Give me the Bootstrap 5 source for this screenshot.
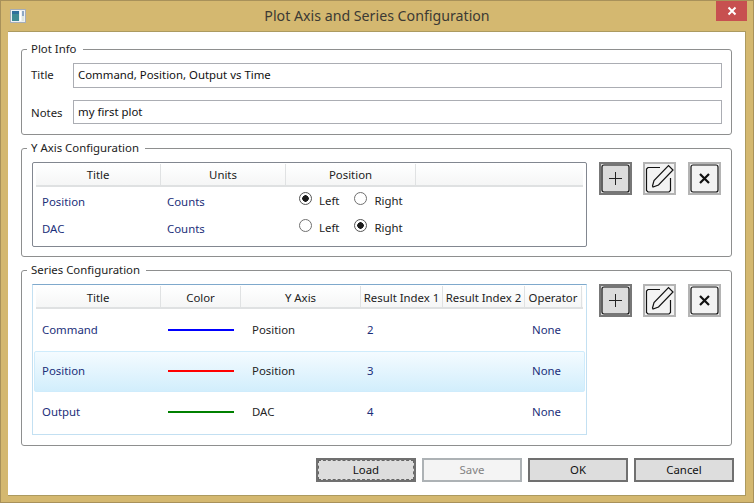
<!DOCTYPE html>
<html lang="en">
<head>
    <meta charset="UTF-8">
    <meta name="viewport" content="width=device-width, initial-scale=1.0">
    <title>Plot Axis and Series Configuration</title>
    <link href="https://cdn.jsdelivr.net/npm/bootstrap@5.3.0/dist/css/bootstrap.min.css" rel="stylesheet">
    <style>
        html, body {
            height: 100%;
        }
        body {
            background-color: #d4b870;
            font-family: "Noto Sans", "Open Sans", sans-serif;
            font-size: 11.4px;
            line-height: 16px;
            color: #1c1c1c;
            overflow: hidden;
        }
        .win-frame {
            width: 754px;
            height: 503px;
            border: 1px solid #a8915a;
            background-color: #d4b870;
        }
        .win-title {
            height: 30px;
            padding-left: 9px;
        }
        .win-caption {
            font-size: 14.2px;
            color: #3c3a34;
            line-height: 30px;
            left: 0;
            right: 0;
            top: 0;
            text-align: center;
        }
        .win-close {
            right: 6px;
            top: 0;
            width: 31px;
            height: 20px;
            background-color: #c75050;
        }
        .win-client {
            height: 465px;
            margin: 0 7px;
            background-color: #fff;
            border: 1px solid #ac9a60;
            border-left: 0;
            padding: 9px 13px 0 13px;
        }
        .group-box {
            border: 1px solid #8e8f8f;
            border-radius: 3px;
            margin: 0 0 5px 0;
            min-width: 0;
        }
        .group-box legend {
            float: none;
            width: auto;
            font-size: 11.4px;
            line-height: 16px;
            margin: 0 0 0 -5px;
            padding: 0 6px 0 4px;
            color: #222;
        }
        .group-info { height: 94px; padding: 6px 9px 0 9px; }
        .group-info legend { margin-left: -4px; }
        .group-axis { height: 117px; padding: 6px 10px 0 10px; }
        .group-series { height: 184px; padding: 6px 10px 0 10px; }
        .field-label {
            width: 42px;
            color: #222;
        }
        .title-label { margin-bottom: 2px; }
        .notes-label { margin-top: 2px; }
        .field-input {
            flex: 1;
            height: 25px;
            border: 1px solid #abadb3;
            padding: 0 4px 2px 4px;
            font-size: 11.4px;
            line-height: 20px;
            color: #111;
            font-family: inherit;
            border-radius: 0;
        }
        .short-input {
            height: 24px;
        }
        .axis-grid {
            width: 555px;
            height: 85px;
            border: 1px solid #828790;
            border-radius: 2px;
            padding: 1px 3px;
        }
        .series-grid {
            width: 555px;
            height: 151px;
            border: 1px solid #c3e0f2;
            border-top-color: #7fa9cc;
            padding: 1px 3px;
        }
        .head-row {
            display: flex;
            height: 23px;
            padding-top: 2px;
            border-bottom: 2px solid #dfe1e2;
            background: linear-gradient(#fff, #f5f6f6);
            text-align: center;
            line-height: 20px;
            color: #222;
        }
        .head-row > div {
            border-right: 1px solid #e0e2e3;
            flex: none;
            margin-top: -2px;
            padding-top: 2px;
        }
        .axis-grid .head-row > div { padding-top: 1px; }
        .axis-cols { display: grid; grid-template-columns: 125px 125px 130px 1fr; }
        .series-cols { display: grid; grid-template-columns: 126px 84px 115px 82px 83px 58px; }
        .axis-row {
            height: 27.5px;
            padding-left: 6px;
            align-items: center;
            margin-right: -1px;
            position: relative;
            top: 1px;
        }
        .series-row {
            height: 41px;
            align-items: center;
            margin: 0 -2px;
            padding-left: 7px;
            border: 1px solid transparent;
            border-radius: 2px;
        }
        .series-row > div { margin-top: -2px; }
        #seriesRows {
            padding-top: 1px;
        }
        .series-row.selected-row {
            background: linear-gradient(#f4fbff, #d2eefc);
            border-color: #cfecfc;
        }
        .cell-link { color: #1b2f7a; }
        .cell-plain { color: #24241f; }
        .swatch-line {
            width: 66px;
            height: 2px;
        }
        .pick-group {
            display: flex;
            gap: 15px;
            margin: -2px 0 0 7px;
            color: #222;
        }
        .pick-group label {
            display: flex;
            align-items: center;
            gap: 7px;
            margin: 0;
        }
        .pick-group .form-check-input {
            width: 13px;
            height: 13px;
            margin: 0 0 5px 0;
            border: 1px solid #707070;
            flex: none;
        }
        .pick-group .form-check-input:checked {
            background-color: #fff;
            border-color: #555;
            background-image: radial-gradient(circle, #1c1c1c 0, #1c1c1c 3px, transparent 3.5px);
        }
        .tool-stack {
            gap: 11px;
            margin-left: 12px;
        }
        .tool-btn {
            width: 33px;
            height: 33px;
            padding: 0;
            border: 2px solid #b4b4b4;
            border-radius: 0;
            background-color: #f3f3f3;
            display: flex;
            align-items: center;
            justify-content: center;
        }
        .tool-btn:last-child { margin-left: 1px; }
        .tool-btn.hot-btn {
            border-color: #777;
            background-color: #dcdcdc;
        }
        .foot-bar {
            gap: 6px;
            padding-top: 12px;
            margin-right: -2px;
        }
        .dlg-btn {
            width: 100px;
            height: 24px;
            padding: 0;
            font-size: 11.4px;
            line-height: 18px;
            border: 2px solid #707070;
            border-radius: 0;
            background-color: #dddddd;
            color: #111;
        }
        .dlg-btn:disabled {
            border-color: #adb2b5;
            background-color: #f4f4f4;
            color: #838383;
            opacity: 1;
        }
        .focus-btn {
            outline: 1px dashed #666;
            outline-offset: -3px;
        }
    </style>
</head>
<body>
    <div class="win-frame">
        <!-- Title bar -->
        <div class="win-title position-relative d-flex align-items-start">
            <svg class="mt-2" width="16" height="14" viewBox="0 0 16 14">
                <rect x="0.5" y="0.5" width="15" height="13" fill="#eef1f4" stroke="#a5adb8"/>
                <rect x="2" y="2" width="7" height="10" fill="#3f8a94"/>
                <rect x="2" y="2" width="7" height="3" fill="#2f6f9c"/>
                <rect x="10" y="2" width="1" height="10" fill="#fff"/>
                <rect x="12" y="2" width="2" height="5" fill="#8fa8c4"/>
                <rect x="12" y="7" width="2" height="5" fill="#dfe6dc"/>
            </svg>
            <div class="win-caption position-absolute">Plot Axis and Series Configuration</div>
            <div class="win-close position-absolute d-flex align-items-center justify-content-center">
                <svg width="10" height="10" viewBox="0 0 10 10"><path d="M1.5 1.5 8.5 8.5M8.5 1.5 1.5 8.5" stroke="#fff" stroke-width="2"/></svg>
            </div>
        </div>

        <div class="win-client">
            <!-- Plot info -->
            <fieldset class="group-box group-info">
                <legend>Plot Info</legend>
                <div class="d-flex align-items-center mb-2 pb-1">
                    <span class="field-label title-label">Title</span>
                    <input class="field-input" type="text" value="Command, Position, Output vs Time">
                </div>
                <div class="d-flex align-items-center">
                    <span class="field-label notes-label">Notes</span>
                    <input class="field-input short-input" type="text" value="my first plot">
                </div>
            </fieldset>

            <!-- Y axis -->
            <fieldset class="group-box group-axis">
                <legend>Y Axis Configuration</legend>
                <div class="d-flex align-items-start">
                    <div class="axis-grid">
                        <div class="head-row">
                            <div style="width:125px">Title</div>
                            <div style="width:125px">Units</div>
                            <div style="width:130px">Position</div>
                        </div>
                        <div class="axis-row axis-cols">
                            <div class="cell-link">Position</div>
                            <div class="cell-link">Counts</div>
                            <div class="pick-group">
                                <label><input class="form-check-input" type="radio" name="axis1" checked>Left</label>
                                <label><input class="form-check-input" type="radio" name="axis1">Right</label>
                            </div>
                        </div>
                        <div class="axis-row axis-cols">
                            <div class="cell-link">DAC</div>
                            <div class="cell-link">Counts</div>
                            <div class="pick-group">
                                <label><input class="form-check-input" type="radio" name="axis2">Left</label>
                                <label><input class="form-check-input" type="radio" name="axis2" checked>Right</label>
                            </div>
                        </div>
                    </div>
                    <div class="tool-stack d-flex">
                        <button class="tool-btn hot-btn" type="button">
                            <svg width="29" height="29" viewBox="0 0 29 29"><rect x="1" y="1" width="27" height="27" rx="2" fill="none" stroke="#111" stroke-width="1.2"/><path d="M14.5 8V21M8 14.5H21" stroke="#222" stroke-width="1"/></svg>
                        </button>
                        <button class="tool-btn" type="button">
                            <svg width="29" height="29" viewBox="0 0 29 29"><path d="M15 3.500H3L1.500 5V26.500L3 28H24L25.500 26.500V14" fill="none" stroke="#111" stroke-width="1.200"/><path d="M7.500 22 9 16.500 23.500 1.500 28 6 13.500 21 8 23Z" fill="#f3f3f3" stroke="#111" stroke-width="1.200"/></svg>
                        </button>
                        <button class="tool-btn" type="button">
                            <svg width="29" height="29" viewBox="0 0 29 29"><rect x="1" y="1" width="27" height="27" rx="2" fill="none" stroke="#111" stroke-width="1.2"/><path d="M10 10 19 19M19 10 10 19" stroke="#111" stroke-width="2.200"/></svg>
                        </button>
                    </div>
                </div>
            </fieldset>

            <!-- Series -->
            <fieldset class="group-box group-series mb-0">
                <legend>Series Configuration</legend>
                <div class="d-flex align-items-start">
                    <div class="series-grid">
                        <div class="head-row">
                            <div style="width:125px">Title</div>
                            <div style="width:80px">Color</div>
                            <div style="width:120px">Y Axis</div>
                            <div style="width:82px">Result Index 1</div>
                            <div style="width:82px">Result Index 2</div>
                            <div style="width:57px">Operator</div>
                        </div>
                        <div id="seriesRows"></div>
                    </div>
                    <div class="tool-stack d-flex">
                        <button class="tool-btn hot-btn" type="button">
                            <svg width="29" height="29" viewBox="0 0 29 29"><rect x="1" y="1" width="27" height="27" rx="2" fill="none" stroke="#111" stroke-width="1.2"/><path d="M14.5 8V21M8 14.5H21" stroke="#222" stroke-width="1"/></svg>
                        </button>
                        <button class="tool-btn" type="button">
                            <svg width="29" height="29" viewBox="0 0 29 29"><path d="M15 3.500H3L1.500 5V26.500L3 28H24L25.500 26.500V14" fill="none" stroke="#111" stroke-width="1.200"/><path d="M7.500 22 9 16.500 23.500 1.500 28 6 13.500 21 8 23Z" fill="#f3f3f3" stroke="#111" stroke-width="1.200"/></svg>
                        </button>
                        <button class="tool-btn" type="button">
                            <svg width="29" height="29" viewBox="0 0 29 29"><rect x="1" y="1" width="27" height="27" rx="2" fill="none" stroke="#111" stroke-width="1.2"/><path d="M10 10 19 19M19 10 10 19" stroke="#111" stroke-width="2.200"/></svg>
                        </button>
                    </div>
                </div>
            </fieldset>

            <!-- Dialog buttons -->
            <div class="foot-bar d-flex justify-content-end">
                <button class="dlg-btn focus-btn" type="button">Load</button>
                <button class="dlg-btn" type="button" disabled>Save</button>
                <button class="dlg-btn" type="button">OK</button>
                <button class="dlg-btn" type="button">Cancel</button>
            </div>
        </div>
    </div>

    <script src="https://cdn.jsdelivr.net/npm/bootstrap@5.3.0/dist/js/bootstrap.bundle.min.js"></script>
    <script>
        // Series rows
        const seriesList = [
            { title: "Command", color: "#0000ff", axis: "Position", index: "2", op: "None" },
            { title: "Position", color: "#ff0000", axis: "Position", index: "3", op: "None", selected: true },
            { title: "Output", color: "#008000", axis: "DAC", index: "4", op: "None" }
        ];
        document.getElementById('seriesRows').innerHTML = seriesList.map(s => `
            <div class="series-row series-cols ${s.selected ? 'selected-row' : ''}">
                <div class="cell-link">${s.title}</div>
                <div><div class="swatch-line" style="background-color:${s.color}"></div></div>
                <div class="cell-plain">${s.axis}</div>
                <div class="cell-link">${s.index}</div>
                <div></div>
                <div class="cell-link">${s.op}</div>
            </div>`).join('');
    </script>
</body>
</html>
